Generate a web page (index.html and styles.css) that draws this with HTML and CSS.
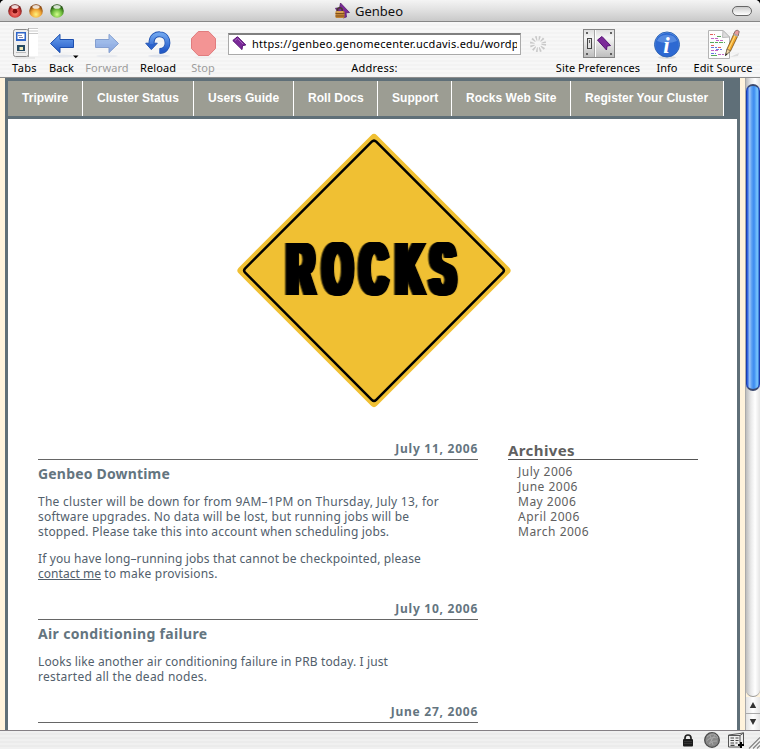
FILE: index.html
```html
<!DOCTYPE html>
<html lang="en">
<head>
<meta charset="utf-8">
<title>Genbeo</title>
<link rel="stylesheet" href="styles.css">
</head>
<body>
<div class="window">
  <header class="titlebar">
    <div class="lights">
      <svg width="68" height="20" viewBox="0 0 68 20">
        <defs>
          <radialGradient id="red" cx=".5" cy=".62" r=".55"><stop offset="0" stop-color="#ff8a80"/><stop offset=".6" stop-color="#d84542"/><stop offset="1" stop-color="#6f1715"/></radialGradient>
          <radialGradient id="amber" cx=".5" cy=".75" r=".65"><stop offset="0" stop-color="#fff27c"/><stop offset=".55" stop-color="#f0a535"/><stop offset="1" stop-color="#84410c"/></radialGradient>
          <radialGradient id="green" cx=".5" cy=".75" r=".65"><stop offset="0" stop-color="#d4ff8c"/><stop offset=".55" stop-color="#6dbb3c"/><stop offset="1" stop-color="#1f500f"/></radialGradient>
        </defs>
        <circle cx="15" cy="11" r="6.8" fill="url(#red)"/><circle cx="15" cy="11.2" r="2.4" fill="#7d0d0d"/><ellipse cx="15" cy="6.9" rx="3.6" ry="1.8" fill="#fff" opacity=".8"/>
        <circle cx="36" cy="11" r="6.8" fill="url(#amber)"/><ellipse cx="36" cy="6.9" rx="3.6" ry="1.8" fill="#fff" opacity=".8"/>
        <circle cx="57" cy="11" r="6.8" fill="url(#green)"/><ellipse cx="57" cy="6.9" rx="3.6" ry="1.8" fill="#fff" opacity=".8"/>
      </svg>
    </div>
    <div class="window-title">
      <svg width="15" height="16" viewBox="0 0 15 16">
        <path d="M5.5 0 14.5 9.5 11 9.8 11.5 14 8 15 2 8 .5 5.2 4.5 5z" fill="#7a2a98" stroke="#4d1266" stroke-width=".7"/>
        <path d="M2.5 8.500V7Q2.500 4.800 4.800 4.800T7.200 7V8.500" fill="none" stroke="#4a3a2e" stroke-width="1.600"/>
        <rect x="0.500" y="8" width="9" height="7" rx="1" fill="#c18233"/>
        <path d="M.5 10.500h9M.5 13h9" stroke="#82501b"/><path d="M1.500 9h6.500" stroke="#f0c477"/>
      </svg>
      <span>Genbeo</span>
    </div>
    <div class="pill"></div>
  </header>

  <div class="toolbar">
    <div class="tool">
      <svg width="36" height="32" viewBox="6 28 36 32">
        <rect x="27" y="29" width="10" height="27" fill="#fff"/><path d="M27 28.500h10M27 31h10M27 33.500h10" stroke="#c9c9c9"/>
        <path d="M27.500 28v29" stroke="#999"/>
        <rect x="12.500" y="29.500" width="15" height="27" rx="2" fill="#eee" stroke="#8b8b8b"/>
        <rect x="15" y="32" width="10" height="9" fill="#2f65c8"/><rect x="16.500" y="33.500" width="7" height="5.500" fill="#fff"/><path d="M17 35.500h4M18 37.500h4" stroke="#88a"/>
        <rect x="16" y="45" width="8" height="6" fill="#244a62"/><rect x="18.500" y="47" width="3.500" height="3" fill="#eee7b5"/><path d="M15 52.500h10" stroke="#bbb"/>
        <path d="M14 58h20" stroke="#ddd"/>
      </svg>
      <span class="label tabs">Tabs</span>
    </div>
    <div class="tool">
      <svg width="36" height="32" viewBox="44 28 36 32">
        <defs><linearGradient id="blue" x2="0" y2="1"><stop offset="0" stop-color="#6ea4ee"/><stop offset="1" stop-color="#2259c8"/></linearGradient></defs>
        <ellipse cx="63" cy="56" rx="11" ry="1.500" fill="#e3e6ec"/>
        <path d="M50.500 43.500 60 34.300V39.500H73.500V47.500H60V52.700z" fill="url(#blue)" stroke="#1d4fae" stroke-linejoin="round"/>
        <path d="M73 55.500h5.500l-2.750 2.800z" fill="#000"/>
      </svg>
      <span class="label back">Back</span>
    </div>
    <div class="tool disabled">
      <svg width="36" height="32" viewBox="89 28 36 32">
        <ellipse cx="107" cy="56" rx="11" ry="1.500" fill="#dfe3eb"/>
        <path d="M118.500 43.500 109 34.300V39.500H95.500V47.500H109V52.700z" fill="url(#blue)" stroke="#1d4fae" stroke-linejoin="round"/>
      </svg>
      <span class="label">Forward</span>
    </div>
    <div class="tool">
      <svg width="36" height="32" viewBox="140 28 36 32">
        <ellipse cx="159" cy="56" rx="11" ry="1.500" fill="#e0e4ec"/>
        <path d="M151.500 44C151 35.500 157 34 160 34.300C165 34.500 167.500 38.500 167.500 43S164.500 51 159.500 51" fill="none" stroke="#2456b4" stroke-width="5.800"/>
        <path d="M145.700 43.200H157.300L151.300 49.600z" fill="#2c63cd" stroke="#2456b4"/>
        <path d="M151.500 44C151 35.500 157 34 160 34.300C165 34.500 167.500 38.500 167.500 43S164.500 51 159.500 50.900" fill="none" stroke="url(#blue)" stroke-width="4.200"/>
      </svg>
      <span class="label reload">Reload</span>
    </div>
    <div class="tool">
      <svg width="36" height="32" viewBox="185 28 36 32">
        <path d="M198.300 31.500H208.700L215.500 38.500V48.500L208.700 55.500H198.300L191.500 48.500V38.500z" fill="#f39494" stroke="#e07c7e"/>
        <ellipse cx="203" cy="57.500" rx="9" ry="1" fill="#eee"/>
      </svg>
      <span class="label stop">Stop</span>
    </div>
    <div class="address">
      <div class="field">
        <svg width="15" height="15" viewBox="0 0 15 15"><path d="M.8 4.500 5.500.7 13.800 9 10.500 9.600 10 13.600z" fill="#7b2a99" stroke="#551173"/><path d="M3 4.500 5.500 2.500 11 8" fill="none" stroke="#a767bd"/></svg>
        <span class="url">https://genbeo.genomecenter.ucdavis.edu/wordpress/</span>
      </div>
      <span class="label addr">Address:</span>
    </div>
    <div class="tool">
      <svg width="26" height="32" viewBox="525 28 26 32">
        <circle cx="538" cy="44" r="5.800" fill="none" stroke="#c9c9c9" stroke-width="4.600" stroke-dasharray="1.400 1.637"/>
      </svg>
    </div>
    <div class="gap"></div>
    <div class="tool">
      <svg width="36" height="32" viewBox="580 28 36 32">
        <defs><linearGradient id="plate" x2="0" y2="1"><stop offset="0" stop-color="#ddd"/><stop offset=".3" stop-color="#f5f5f5"/><stop offset="1" stop-color="#bdbdbd"/></linearGradient></defs>
        <rect x="583.500" y="29.500" width="31" height="28" fill="url(#plate)" stroke="#858585"/>
        <path d="M594.500 30v27" stroke="#a5a5a5"/><path d="M595.500 30v27" stroke="#fff"/>
        <g fill="#444"><circle cx="587" cy="33" r="1.100"/><circle cx="587" cy="54" r="1.100"/><circle cx="611" cy="33" r="1.100"/><circle cx="611" cy="54" r="1.100"/></g>
        <rect x="587.500" y="38.500" width="4" height="10" fill="#e0e0e0" stroke="#444"/><path d="M589.500 40v3" stroke="#666"/>
        <path d="M597.500 40 602 36.500 610.500 45.500 607 46 606.500 50z" fill="#7b2a99" stroke="#551173"/>
      </svg>
      <span class="label">Site Preferences</span>
    </div>
    <div class="tool">
      <svg width="36" height="32" viewBox="649 28 36 32">
        <ellipse cx="667" cy="57.500" rx="9" ry="1.500" fill="#ddd"/>
        <circle cx="667" cy="44.500" r="12.500" fill="url(#blue)" stroke="#3166b5"/>
        <circle cx="667" cy="44.500" r="11.500" fill="#2d69d2"/>
        <path d="M657 41a10.500 9 0 0 1 20 0q-10 4-20 0z" fill="#6b9ce8" opacity=".65"/>
        <text x="666.500" y="53" class="info-letter">i</text>
      </svg>
      <span class="label info">Info</span>
    </div>
    <div class="tool">
      <svg width="36" height="32" viewBox="705 28 36 32">
        <path d="M730 57 739 53 738 56z" fill="#ddd"/>
        <path d="M708.500 30.500H723L729.500 37V58.500H708.500z" fill="#fdfdfd" stroke="#b4b4b4"/><path d="M723 30.500 722.500 37.500 729.500 37z" fill="#ddd" stroke="#bbb"/>
        <g fill="none" stroke-width="1"><path d="M710 34.500h5M718 47.500h4M711 45.500h3" stroke="#e4605e" stroke-dasharray="3 1"/><path d="M717 36.500h5M710 42.500h8M719 42.500h6" stroke="#59a85c" stroke-dasharray="4 1"/><path d="M711 38.500h8M716 40.500h8M711 50.500h7M718 54.500h6" stroke="#c467c6" stroke-dasharray="3 1"/><path d="M711 47.500h6M716 49.500h6M711 53.500h5" stroke="#6878e2" stroke-dasharray="3 1"/><path d="M711 55.500h6" stroke="#59a85c"/></g>
        <path d="M725.500 55.500 727 49 734.500 32.500 738.500 34.500 730.500 51z" fill="#f0a52a" stroke="#77531d" stroke-width=".8"/>
        <path d="M728.500 49.500 736 33.500" stroke="#ffd878" stroke-width="1.200"/><path d="M725.500 55.500 727 49 730.500 51z" fill="#edd2a0" stroke="#555" stroke-width=".6"/><path d="M725.300 56 725.800 53.200 727.400 54.200z" fill="#222"/>
        <path d="M733.800 34 735.200 31Q737 29 739.300 31.500L738 36z" fill="#e79b9b" stroke="#7d6560" stroke-width=".8"/><path d="M733.800 34.200 738 36.200" stroke="#aaa" stroke-width="1.500"/>
      </svg>
      <span class="label edit">Edit Source</span>
    </div>
  </div>

  <div class="viewport">
    <main class="page">
      <nav class="menu">
        <a class="w75">Tripwire</a><a class="w111">Cluster Status</a><a class="w100">Users Guide</a><a class="w84">Roll Docs</a><a class="w74">Support</a><a class="w119">Rocks Web Site</a><a class="w153">Register Your Cluster</a>
      </nav>
      <div class="content">
        <svg class="sign" width="276" height="276" viewBox="236 133 276 276">
          <path d="M374 138 506.500 270.500 374 403 241.500 270.500z" fill="#f0c033" stroke="#f0c033" stroke-width="8" stroke-linejoin="round"/>
          <path d="M371.800 141.700Q374 139.500 376.200 141.700L502.800 268.300Q505 270.500 502.800 272.700L376.200 399.800Q374 402 371.800 399.800L245.200 272.700Q243 270.500 245.200 268.300z" fill="none" stroke="#000" stroke-width="2.500"/>
          <text class="sign-text" transform="translate(284.500 294) scale(.52 1)" x="5.800 75.200 146 215.400 281.200" y="0">ROCKS</text>
        </svg>
        <div class="columns">
          <div class="posts">
            <article>
              <div class="date">July 11, 2006</div>
              <h2>Genbeo Downtime</h2>
              <p><span class="s26">The cluster will be down for from 9AM–1PM on Thursday, July 13, for</span><br><span class="s19">software upgrades. No data will be lost, but running jobs will be</span><br><span class="s16">stopped. Please take this into account when scheduling jobs.</span></p>
              <p><span class="s12">If you have long–running jobs that cannot be checkpointed, please</span><br><a class="s03">contact me</a><span class="s19"> to make provisions.</span></p>
            </article>
            <article>
              <div class="date">July 10, 2006</div>
              <h2 class="wide">Air conditioning failure</h2>
              <p><span class="s12">Looks like another air conditioning failure in PRB today. I just</span><br><span class="s26">restarted all the dead nodes.</span></p>
            </article>
            <article>
              <div class="date">June 27, 2006</div>
            </article>
          </div>
          <aside>
            <h3>Archives</h3>
            <ul><li>July 2006</li><li>June 2006</li><li>May 2006</li><li>April 2006</li><li>March 2006</li></ul>
          </aside>
        </div>
      </div>
    </main>
    <div class="scrollbar">
      <div class="track"><div class="thumb"></div></div>
      <div class="arrows">
        <svg width="14" height="33" viewBox="0 0 14 33"><path d="M7 5 10.200 11H3.800zM7 28 10.200 22H3.800z" fill="#333"/><path d="M0 16.500h14" stroke="#aaa"/></svg>
      </div>
    </div>
  </div>

  <footer class="status">
    <svg width="80" height="18" viewBox="680 731 80 18">
      <path d="M685 740V738Q685 735 688 735T691 738V740" fill="none" stroke="#222" stroke-width="1.700"/><rect x="683" y="739" width="10" height="7.500" rx="1" fill="#1c1c1c"/><path d="M684 741.500h8M684 743.500h8" stroke="#444" stroke-width=".6"/>
      <circle cx="712" cy="740" r="7.300" fill="#888" stroke="#4b4b4b" stroke-width="1.300"/>
      <path d="M707 737q4-4 7-3t4 4M706.500 741q5-5 10-3M709 744q5-4 8-3M710 735l3 10M715 735l-6 9" fill="none" stroke="#aaa" stroke-width=".9"/>
      <path d="M728.500 735 740 733.500 743.500 732.800V744L740 747H728.500z" fill="#eee" stroke="#555"/><path d="M728.500 735.500H740V747M740 735.500 743.500 733" fill="none" stroke="#555"/>
      <path d="M730.500 738h3.500M735.500 738h3M730.500 740.500h3.500M735.500 740.500h3M730.500 743h3.500M735.500 743h2M730.500 745.300h4" stroke="#444" stroke-width="1.200"/>
      <path d="M741 742v6M738 745h6" stroke="#000" stroke-width="2"/>
      <path d="M749 748.500 760 737.500M753 748.500 760 741.500M757 748.500 760 745.500" stroke="#808080" stroke-width="1.100"/>
    </svg>
  </footer>
</div>
</body>
</html>
```
FILE: styles.css
```css
* { box-sizing: border-box; }
body { margin: 0; background: #000; font-family: "Noto Sans", "Open Sans", sans-serif; overflow: hidden; }
svg { display: block; flex: none; }
.window { display: flex; flex-direction: column; width: 760px; height: 749px; overflow: hidden; background: #eee; border-radius: 5px 5px 0 0; }

.titlebar { display: flex; height: 22px; flex: none; justify-content: space-between; border-bottom: 1px solid #868686; background: linear-gradient(#f4f4f4, #e2e2e2 45%, #c9c9c9); }
.lights { width: 80px; }
.window-title { display: flex; gap: 5px; padding-top: 3px; width: 80px; font-size: 13px; line-height: 17px; color: #111; margin-left: -10px; }
.window-title span { white-space: nowrap; }
.pill { width: 20px; height: 10px; margin: 6px 8px 0 52px; border: 1.5px solid #666; border-radius: 5px; background: linear-gradient(#ccc, #fff); }

.toolbar { display: grid; grid-template-columns: 37px 37px 54px 48px 42px 301px 26px 1px 92px 46px 66px; height: 56px; flex: none; padding: 6px 4px 0 6px; border-bottom: 1px solid #8d8d8d; background: repeating-linear-gradient(#f7f7f7 0 2px, #f3f3f3 2px 4px); }
.tool { display: flex; flex-direction: column; align-items: center; }
.label { margin-top: 1px; font-size: 11px; line-height: 14px; letter-spacing: .07px; white-space: nowrap; color: #000; }
.tabs { letter-spacing: .35px; }
.back, .edit { letter-spacing: .12px; }
.reload { letter-spacing: .1px; }
.addr { letter-spacing: .22px; margin-top: 6px; }
.info { letter-spacing: 0; }
.stop { color: #9c9c9c; }
.disabled svg { opacity: .52; }
.disabled .label { color: #9c9c9c; }
.address { display: flex; flex-direction: column; align-items: center; padding-top: 5px; }
.field { display: flex; align-items: center; width: 293px; height: 22px; border: 1px solid #aaa; border-top: 2px solid #808080; background: #fff; padding: 0 3px 2px; gap: 5px; }
.url { flex: 1; font-size: 11px; line-height: 16px; letter-spacing: .24px; color: #000; overflow: hidden; white-space: nowrap; }
.info-letter { font: italic bold 23px "Liberation Serif", serif; fill: #fff; text-anchor: middle; }

.viewport { display: flex; height: 652px; flex: none; background: #fff3dc; overflow: hidden; }
.page { width: 735px; margin-left: 5px; margin-right: 5px; border: 3px solid #5f6f78; border-bottom: 0; background: #fff; }
.menu { display: flex; height: 38px; border-bottom: 3px solid #5f6f78; background: #5f6f78; }
.menu a { padding: 0 0 0 14px; border-right: 1px solid #fff; background: #9c9d93; color: #fff; font: bold 12px/34px "Liberation Sans", Arial, sans-serif; letter-spacing: .04px; white-space: nowrap; }
.w75 { width: 75px; }
.w111 { width: 111px; }
.w100 { width: 100px; }
.w84 { width: 84px; }
.w74 { width: 74px; }
.w119 { width: 119px; }
.w153 { width: 153px; }

.content { padding: 14px 39px 0 30px; }
.sign { margin: 0 0 32px 198px; }
.sign-text { font: bold 72px "Liberation Sans", Arial, sans-serif; fill: #000; stroke: #000; stroke-width: 2px; filter: drop-shadow(2.2px 0 0 #000) drop-shadow(-2.2px 0 0 #000) drop-shadow(4.4px 0 0 #000) drop-shadow(-4.4px 0 0 #000); }
.columns { display: flex; justify-content: space-between; }
.posts { width: 440px; }
article { margin-bottom: 20px; color: #52606c; font-size: 12px; line-height: 15px; }
.date { height: 19px; text-align: right; font-weight: bold; letter-spacing: .74px; border-bottom: 1px solid #666; color: #64757f; }
h2 { margin: 4px 0 10px; font-size: 14px; line-height: 20px; letter-spacing: .18px; color: #64757f; }
h2.wide { letter-spacing: .34px; }
p { margin: 0 0 12px; white-space: nowrap; }
p a { text-decoration: underline; }
.s26 { letter-spacing: .26px; }
.s19 { letter-spacing: .19px; }
.s16 { letter-spacing: .16px; }
.s12 { letter-spacing: .12px; }
.s03 { letter-spacing: .03px; }
aside { width: 190px; }
h3 { margin: 0; height: 19px; border-bottom: 1px solid #555; font-size: 15px; line-height: 18px; letter-spacing: .4px; color: #606060; }
ul { margin: 4px 0 0; padding: 0 0 0 10px; list-style: none; font-size: 12px; line-height: 15px; letter-spacing: .5px; color: #606060; }

.scrollbar { display: flex; flex-direction: column; width: 15px; border-left: 1px solid #aaa; }
.track { height: 619px; padding-top: 6px; border-bottom: 1px solid #999; border-radius: 0 0 7px 7px; background: linear-gradient(90deg, #bdbdbd, #e9e9e9 35%, #fff 65%, #e4e4e4); }
.thumb { height: 307px; border: 1px solid #1a3dae; border-top: 2px solid #3b4a70; border-bottom: 2px solid #3b4a70; border-radius: 7px; background: linear-gradient(90deg, #1c50d8, #9cc6f8 22%, #5a9ff2 40%, #3b8af0 58%, #7cc8ff 86%, #2f70d0); }
.arrows { height: 33px; background: linear-gradient(90deg, #e2e2e2, #fff 50%, #e5e5e5); }

.status { display: flex; justify-content: flex-end; height: 19px; flex: none; border-top: 1px solid #858085; background: repeating-linear-gradient(#f0f0f0 0 2px, #ebebeb 2px 4px); }
```
